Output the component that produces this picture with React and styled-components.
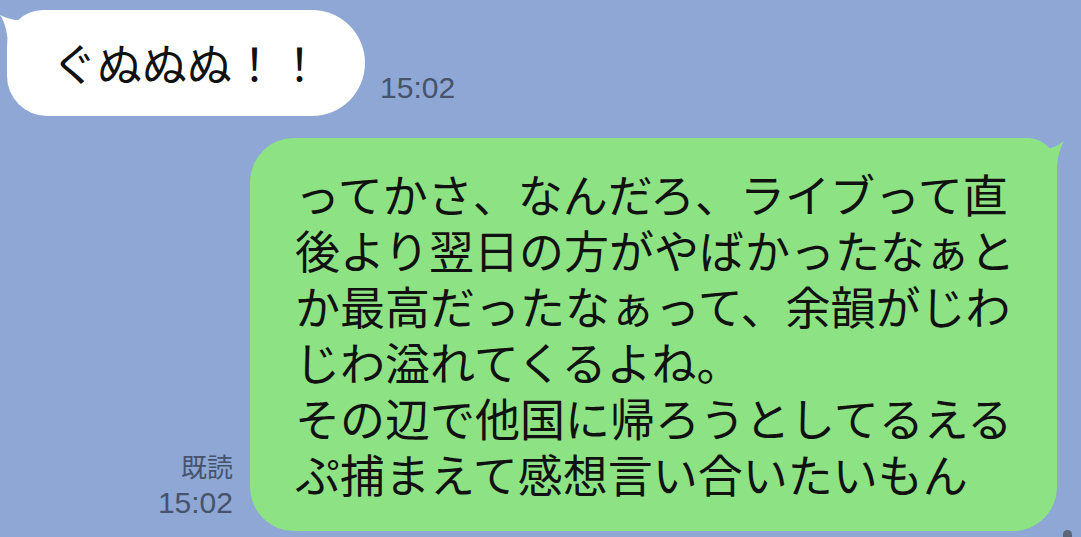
import React from "react";
import styled, { createGlobalStyle } from "styled-components";

const Global = createGlobalStyle`
  html, body {
    margin: 0;
    padding: 0;
    background: #8ea7d5;
  }
  body {
    font-family: "Noto Sans CJK JP", "Noto Sans", sans-serif;
  }
`;

const Screen = styled.div`
  position: relative;
  width: 1081px;
  height: 537px;
  overflow: hidden;
  background: #8ea7d5;
  padding-top: 10px;
  box-sizing: border-box;
  display: flex;
  flex-direction: column;
`;

const Row = styled.div`
  display: flex;
  align-items: flex-end;
  gap: ${(p) => (p.$mine ? "17px" : "15px")};
  justify-content: ${(p) => (p.$mine ? "flex-end" : "flex-start")};
  padding: ${(p) => (p.$mine ? "0 24px 0 0" : "0 0 0 7px")};
  margin-top: ${(p) => (p.$mine ? "22px" : "0")};
`;

const Bubble = styled.div`
  position: relative;
  background: ${(p) => (p.$mine ? "#8de383" : "#ffffff")};
  color: #111;
  font-family: "Noto Sans CJK JP", sans-serif;
  font-size: 45px;
  line-height: 56px;
  white-space: pre-line;
  padding: ${(p) => (p.$mine ? "28px 42px 29px 45px" : "25px 43px 25px 45px")};
  border-radius: ${(p) => (p.$mine ? "44px 30px 44px 44px" : "36px 53px 53px 40px")};
`;

const Tail = styled.svg`
  position: absolute;
  top: 0;
  ${(p) => (p.$mine ? "right: -10px;" : "left: -7px;")}
  width: 40px;
  height: 40px;
  overflow: visible;
`;

const Meta = styled.div`
  display: flex;
  flex-direction: column;
  align-items: flex-end;
  padding-bottom: 13px;
  color: #46536b;
`;

const ReadMark = styled.div`
  font-family: "Noto Sans CJK JP", sans-serif;
  font-size: 26px;
  line-height: 26px;
  margin-bottom: 9px;
`;

const Time = styled.div`
  font-family: "Liberation Sans", Arial, sans-serif;
  font-size: 30px;
  line-height: 30px;
`;

const ScrollDot = styled.div`
  position: absolute;
  left: 1063px;
  top: 530px;
  width: 9px;
  height: 14px;
  border-radius: 5px;
  background: #5b6578;
`;

export default function App() {
  return (
    <>
      <Global />
      <Screen>
        <Row>
          <Bubble>
            <Tail $mine={false} viewBox="0 0 40 40">
              <path
                d="M0 5 C 8 9, 16 11, 25 10 C 31 9, 36 4, 42 0 L 46 0 L 46 38 L 8 38 C 8 24, 5 12, 0 5 Z"
                fill="#ffffff"
              />
            </Tail>
            ぐぬぬぬ！！
          </Bubble>
          <Meta>
            <Time>15:02</Time>
          </Meta>
        </Row>
        <Row $mine>
          <Meta>
            <ReadMark>既読</ReadMark>
            <Time>15:02</Time>
          </Meta>
          <Bubble $mine>
            <Tail $mine viewBox="0 0 40 40">
              <path
                d="M0 0 L3 0 C 8 5, 12 10, 16 11 C 24 11, 31 8, 37 3 C 32 12, 30 22, 30 34 L 0 34 Z"
                fill="#8de383"
              />
            </Tail>
            {"ってかさ、なんだろ、ライブって直\n後より翌日の方がやばかったなぁと\nか最高だったなぁって、余韻がじわ\nじわ溢れてくるよね。\nその辺で他国に帰ろうとしてるえる\nぷ捕まえて感想言い合いたいもん"}
          </Bubble>
        </Row>
        <ScrollDot />
      </Screen>
    </>
  );
}
